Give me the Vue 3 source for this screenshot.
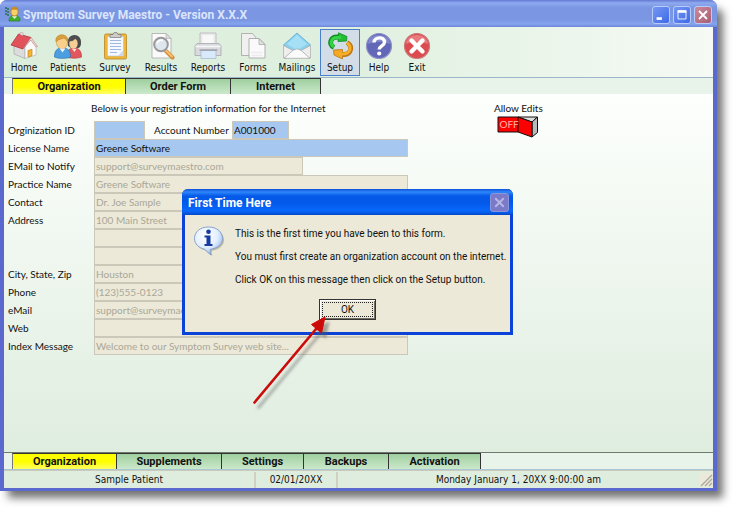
<script setup>
import { ref } from 'vue'

const tools = [
  { name: 'Home', size: 'w40' },
  { name: 'Patients', size: 'w48' },
  { name: 'Survey', size: 'w46' },
  { name: 'Results', size: 'w46' },
  { name: 'Reports', size: 'w48' },
  { name: 'Forms', size: 'w42' },
  { name: 'Mailings', size: 'w46' },
  { name: 'Setup', size: 'w40' },
  { name: 'Help', size: 'w38' },
  { name: 'Exit', size: 'w38' }
]

const topTabs = [
  { name: 'Organization', size: 't114' },
  { name: 'Order Form', size: 't105' },
  { name: 'Internet', size: 't90' }
]
const bottomTabs = [
  { name: 'Organization', size: 't105' },
  { name: 'Supplements', size: 't105' },
  { name: 'Settings', size: 't82' },
  { name: 'Backups', size: 't85' },
  { name: 'Activation', size: 't92' }
]
const activeTop = ref('Organization')
const activeBottom = ref('Organization')

const fields = [
  { id: 'license', label: 'License Name', value: 'Greene Software', kind: 'blue' },
  { id: 'notify', label: 'EMail to Notify', value: 'support@surveymaestro.com', kind: 'medium' },
  { id: 'practice', label: 'Practice Name', value: 'Greene Software' },
  { id: 'contact', label: 'Contact', value: 'Dr. Joe Sample' },
  { id: 'address1', label: 'Address', value: '100 Main Street' },
  { id: 'address2', label: '', aria: 'Address line 2', value: '' },
  { id: 'address3', label: '', aria: 'Address line 3', value: '' },
  { id: 'city', label: 'City, State, Zip', value: 'Houston' },
  { id: 'phone', label: 'Phone', value: '(123)555-0123' },
  { id: 'email', label: 'eMail', value: 'support@surveymaestro.com' },
  { id: 'web', label: 'Web', value: '' },
  { id: 'index', label: 'Index Message', value: 'Welcome to our Symptom Survey web site...' }
]
</script>

<template>
  <div class="desktop">
    <main class="window">
      <header class="titlebar">
        <svg class="app-icon" viewBox="0 0 16 16" aria-hidden="true">
          <path d="M1 1v9M3 2v9" stroke="#1c6b3a" stroke-width="1.3" stroke-dasharray="2 1" />
          <path d="M4 15c0-4 2-5.5 5.500-5.500S15 11 15 15z" fill="#3fae2c" stroke="#1f7a1c" stroke-width=".6" />
          <path d="M7 10l2.500 3L12 10z" fill="#eaf6d8" />
          <ellipse cx="9.500" cy="5.500" rx="3.600" ry="4.500" fill="#f7cf62" stroke="#a9721b" stroke-width=".7" />
          <path d="M6 4.500C6 0 13 0 13 4.500c-2-1.300-5-1.300-7 0z" fill="#c98922" />
        </svg>
        <h1>Symptom Survey Maestro - Version X.X.X</h1>
        <div class="controls">
          <button type="button" aria-label="Minimize"><svg viewBox="0 0 18 18"><path d="M4 13h6" stroke="#fff" stroke-width="3" /></svg></button>
          <button type="button" aria-label="Maximize"><svg viewBox="0 0 18 18"><path d="M4.500 5v8.500h9V5z" fill="none" stroke="#fff" /><path d="M4 5h10" stroke="#fff" stroke-width="3" /></svg></button>
          <button type="button" class="close" aria-label="Close"><svg viewBox="0 0 18 18"><path d="M4.500 4.500l9 9M13.500 4.500l-9 9" stroke="#fff" stroke-width="2" /></svg></button>
        </div>
      </header>

      <nav class="toolbar" aria-label="Main">
        <button v-for="t in tools" :key="t.name" type="button" class="tool" :class="[t.size, { pressed: t.name === 'Setup' }]">
          <svg v-if="t.name === 'Home'" viewBox="0 0 28 28" aria-hidden="true">
            <path d="M4 13v9l11 4.500V14L8 6z" fill="#dcdcdc" stroke="#a8a8a8" stroke-width=".7" />
            <path d="M15 14l6-6.500 5 7V23l-11 3.500z" fill="#fafafa" stroke="#b5b5b5" stroke-width=".7" />
            <path d="M1 13L8.500 2 21 5.500 13 17z" fill="#e2525a" stroke="#b3343c" stroke-width=".8" />
            <path d="M21 5.500l6.500 9-1.500.5-5.300-7-6.700 8-1 1z" fill="#f7dcdc" stroke="#b98080" stroke-width=".6" />
            <path d="M10 2.500V.8h3v3z" fill="#eee" stroke="#b08080" stroke-width=".5" />
            <path d="M18 18.500l4-1.200v6.500l-4 1.300z" fill="#f5b52e" stroke="#c2821b" stroke-width=".7" />
          </svg>
          <svg v-else-if="t.name === 'Patients'" viewBox="0 0 28 28" aria-hidden="true">
            <path d="M13 25c0-6 2-9 7-9s7.500 3 7.500 9c-3 1.500-12 1.500-14.500 0z" fill="#e4575c" stroke="#b8393f" stroke-width=".7" />
            <path d="M14 14c-3-14 14-14 13-3 0 4-2 5-3 5h-7z" fill="#4a4a4a" />
            <ellipse cx="19.500" cy="11.500" rx="4.200" ry="5.300" fill="#f6cf96" />
            <path d="M14.500 9c4 1 6-1 7-3 1 2 2 3 4 3-1-6-10-7-11 0z" fill="#505050" />
            <path d="M.5 25c0-6 2-9 8-9s8 3 8 9c-3 1.800-13 1.800-16 0z" fill="#4b9fe0" stroke="#2874b6" stroke-width=".7" />
            <ellipse cx="8" cy="10.500" rx="5.500" ry="6.500" fill="#f8d08c" stroke="#c89545" stroke-width=".6" />
            <path d="M2 10C0 1 15 0 14 10c-2-3-3-3-4-4-2 1-6 1-8 4z" fill="#d9a03d" stroke="#b47a24" stroke-width=".5" />
            <path d="M5.500 16.500l3 4 3-4z" fill="#e7f3fc" />
            <path d="M18 17l2.500 3 2-3z" fill="#fbe1da" />
          </svg>
          <svg v-else-if="t.name === 'Survey'" viewBox="0 0 28 28" aria-hidden="true">
            <rect x="3.500" y="2" width="22" height="25" rx="1.500" fill="#efb638" stroke="#b88624" stroke-width=".8" />
            <path d="M6.500 4.500h16V24h-16z" fill="#f5f9ff" stroke="#b6bfce" stroke-width=".6" />
            <path d="M9 8.500h11M9 11.500h11M9 14.500h11M9 17.500h11M9 20.500h7" stroke="#9eb8e2" stroke-width="1.200" />
            <path d="M17 24l5.500-6V24z" fill="#ccd7e8" />
            <path d="M9 5.500V2.500h3L13 .6h3l1 1.900h3v3z" fill="#ccc" stroke="#777" stroke-width=".7" />
          </svg>
          <svg v-else-if="t.name === 'Results'" viewBox="0 0 28 28" aria-hidden="true">
            <path d="M5 1.500h14l5 5V26H5z" fill="#fafafa" stroke="#aaa" stroke-width=".8" />
            <path d="M19 1.500v5h5z" fill="#ddd" stroke="#aaa" stroke-width=".6" />
            <path d="M19 19l6.500 6.500" stroke="#d08a3a" stroke-width="4" stroke-linecap="round" />
            <path d="M19 18.500l6 6" stroke="#f8bd66" stroke-width="2.200" stroke-linecap="round" />
            <circle cx="14" cy="12.500" r="6.800" fill="#dfe7ee" stroke="#999" stroke-width="2" />
            <path d="M10 11.500c1-3 4-4 6-3" fill="none" stroke="#fff" stroke-width="1.500" />
          </svg>
          <svg v-else-if="t.name === 'Reports'" viewBox="0 0 28 28" aria-hidden="true">
            <path d="M6 1h16v12H6z" fill="#e9e9eb" stroke="#b5b5b8" stroke-width=".8" />
            <path d="M8.500 3h11v8h-11z" fill="#f8f8f8" />
            <path d="M3 11.500h22l2 2.500v9.500H1V14z" fill="#d9dadf" stroke="#a7a7ac" stroke-width=".8" />
            <path d="M1.500 14.500h25" stroke="#f7f7f7" stroke-width="1.500" />
            <path d="M7 18.500h15v8H7z" fill="#d8e9fc" stroke="#a4b6ca" stroke-width=".7" />
            <path d="M5.500 18h18" stroke="#888" />
          </svg>
          <svg v-else-if="t.name === 'Forms'" viewBox="0 0 28 28" aria-hidden="true">
            <path d="M2.500 1.500h11l4 5v17h-15z" fill="#f0f0f0" stroke="#aaa" stroke-width=".9" />
            <path d="M10 6.500h10l6 6V26H10z" fill="#fafafa" stroke="#a8a8a8" stroke-width=".9" />
            <path d="M20 6.500v6h6z" fill="#e2e2e2" stroke="#a8a8a8" stroke-width=".8" />
            <path d="M12.500 23.500h11M12.500 20.500h11" stroke="#ececec" stroke-width="1.500" />
          </svg>
          <svg v-else-if="t.name === 'Mailings'" viewBox="0 0 28 28" aria-hidden="true">
            <path d="M.5 13L14 1l13.500 12-13.500 9z" fill="#8bd2ef" stroke="#5baacb" stroke-width=".8" />
            <path d="M4 12L14 3l10 9-10 6z" fill="#a6e0f6" />
            <path d="M.5 13.500l9.500 5L4 26H.5zM27.500 13.500l-9.500 5 6 7.500h3.500z" fill="#eee" stroke="#aaa" stroke-width=".7" />
            <path d="M1 26.300l9-8 4-1.500 4 1.500 9 8z" fill="#fbfbfb" stroke="#aaa" stroke-width=".8" />
          </svg>
          <svg v-else-if="t.name === 'Setup'" viewBox="0 0 28 28" aria-hidden="true">
            <path d="M8 15.500C2 12 4.500 5 11 5h3" fill="none" stroke="#168b23" stroke-width="4.800" />
            <path d="M12.500.8l8.500 3.700-.5 4.500-8.500.500z" fill="#21bd35" stroke="#168b23" stroke-width=".8" />
            <path d="M8 15C3 12 5 5.500 11 5.500h4" fill="none" stroke="#35d447" stroke-width="3" />
            <path d="M21 10.500c6 3.500 4.500 11.500-3 12h-4" fill="none" stroke="#bb771a" stroke-width="4.800" />
            <path d="M16.500 27l-8.500-4-.5-5 9-.5z" fill="#f4a923" stroke="#bb771a" stroke-width=".8" />
            <path d="M21 11c5 3 4 10.500-3 11h-5" fill="none" stroke="#f6ad27" stroke-width="3" />
          </svg>
          <svg v-else-if="t.name === 'Help'" viewBox="0 0 28 28" aria-hidden="true">
            <circle cx="14" cy="14" r="12.500" fill="#6267b8" stroke="#8e92c7" stroke-width="1.200" />
            <path d="M3 12C4 0 24 0 25 12 18 9 10 9 3 12z" fill="#8589cc" />
            <path d="M9 10.500c.2-6 10.700-6.200 10.500-.3-.1 3.800-5.300 3.600-5.300 7.300" fill="none" stroke="#fff" stroke-width="3.400" />
            <circle cx="14.200" cy="21.500" r="2.100" fill="#fff" />
          </svg>
          <svg v-else viewBox="0 0 28 28" aria-hidden="true">
            <circle cx="14" cy="14" r="12.500" fill="#dc4b50" stroke="#c87979" stroke-width="1.200" />
            <path d="M3 12C4 0 24 0 25 12 18 9 10 9 3 12z" fill="#e77b7e" />
            <path d="M8.500 8.500l11 11M19.500 8.500l-11 11" stroke="#fff" stroke-width="4.400" stroke-linecap="round" />
          </svg>
          <span>{{ t.name }}</span>
        </button>
      </nav>

      <nav class="tabs" aria-label="Form pages">
        <button v-for="t in topTabs" :key="t.name" type="button" :class="[t.size, { active: t.name === activeTop }]" @click="activeTop = t.name">{{ t.name }}</button>
      </nav>

      <section class="content">
        <form class="form" @submit.prevent>
          <p class="intro">Below is your registration information for the Internet</p>
          <div class="row">
            <label for="orgid">Orginization ID</label>
            <input id="orgid" class="blue short" value="" readonly />
            <label class="account" for="account">Account Number</label>
            <input id="account" class="blue number" value="A001000" readonly />
          </div>
          <div v-for="f in fields" :key="f.id" class="row">
            <label :for="f.id">{{ f.label }}</label>
            <input :id="f.id" :class="f.kind" :value="f.value" :aria-label="f.aria" :disabled="f.kind !== 'blue'" :readonly="f.kind === 'blue'" />
          </div>
        </form>
        <div class="edits">
          <span id="edits-label">Allow Edits</span>
          <button type="button" class="switch" role="switch" aria-checked="false" aria-labelledby="edits-label">
            <svg viewBox="0 0 42 22" aria-hidden="true">
              <path d="M1 1h20v15H1z" fill="#f00" stroke="#111" />
              <path d="M21 1h19l-5 5z" fill="#ddd" stroke="#111" />
              <path d="M35 6l5.500-5v15.500L35 21z" fill="#b9b9b9" stroke="#111" />
              <path d="M21 1l14 5v15l-14-5z" fill="#f00" stroke="#111" />
            </svg>
            <span>OFF</span>
          </button>
        </div>
      </section>

      <nav class="tabs bottom" aria-label="Sections">
        <button v-for="t in bottomTabs" :key="t.name" type="button" :class="[t.size, { active: t.name === activeBottom }]" @click="activeBottom = t.name">{{ t.name }}</button>
      </nav>

      <footer class="status">
        <span class="patient">Sample Patient</span>
        <span class="date">02/01/20XX</span>
        <span class="clock">Monday January 1, 20XX 9:00:00 am</span>
        <svg viewBox="0 0 14 14" aria-hidden="true"><path d="M2 13L13 2M6 13l7-7M10 13l3-3" stroke="#aaa79a" stroke-width="1.300" /></svg>
      </footer>
    </main>

    <section class="dialog" role="dialog" aria-labelledby="dialog-title">
      <header>
        <h2 id="dialog-title">First Time Here</h2>
        <button type="button" aria-label="Close message" disabled><svg viewBox="0 0 18 18"><path d="M4.500 4.500l9 9M13.500 4.500l-9 9" stroke="#b9b8e8" stroke-width="2" /></svg></button>
      </header>
      <div class="message">
        <svg class="info" viewBox="0 0 32 32" aria-hidden="true">
          <defs>
            <radialGradient id="bubble" cx=".4" cy=".3" r=".7">
              <stop offset="0" stop-color="#fff" />
              <stop offset=".6" stop-color="#e3efff" />
              <stop offset="1" stop-color="#9fbfed" />
            </radialGradient>
          </defs>
          <path d="M17 3C8.500 3 3 8 3 14c0 5.500 4.500 9.500 10 10.700 2 2 4 3.500 6.500 5.300-1-2.500-1-4-.5-5.300 6.500-.7 12-4.700 12-10.700C31 8 25.500 3 17 3z" fill="#a6a492" opacity=".7" />
          <path d="M15.500 1C7 1 1.500 6 1.500 12.500c0 5.500 4.500 9.500 10 10.700 2 2 4 3.800 6.500 5.800-1-3-1-4.500-.5-5.800C24 22.500 29.500 18.500 29.500 12.500 29.500 6 24 1 15.500 1z" fill="url(#bubble)" stroke="#7d9cc9" stroke-width=".9" />
          <circle cx="15.500" cy="5.800" r="2.300" fill="#173c9f" />
          <path d="M11.500 9.500h6V18h2v2h-8v-2h2v-6.500h-2z" fill="#173c9f" />
        </svg>
        <div class="copy">
          <p>This is the first time you have been to this form.</p>
          <p>You must first create an organization account on the internet.</p>
          <p>Click OK on this message then click on the Setup button.</p>
        </div>
      </div>
      <button type="button" class="ok"><span>OK</span></button>
    </section>

    <svg class="pointer" viewBox="0 0 90 100" aria-hidden="true">
      <defs>
        <filter id="soft" x="-20%" y="-20%" width="140%" height="140%"><feGaussianBlur stdDeviation="1.500" /></filter>
        <g id="arrow">
          <path d="M4.500 87.500L66 14" stroke-width="2.600" stroke-linecap="round" />
          <path d="M75 2L61.500 9.500l10 8.500z" stroke-width="1" />
        </g>
      </defs>
      <use href="#arrow" x="4" y="5" fill="#555" stroke="#555" opacity=".5" filter="url(#soft)" />
      <use href="#arrow" fill="#cc0a0a" stroke="#cc0a0a" />
    </svg>
  </div>
</template>

<style>
body {
  margin: 0;
  background: #fff;
}
</style>

<style scoped>
.desktop {
  --tahoma: "DejaVu Sans Condensed", "Liberation Sans", sans-serif;
  --ui: Lato, "Liberation Sans", sans-serif;
  --message: Roboto, "Liberation Sans", sans-serif;
  --caption: Roboto, "Noto Sans", sans-serif;
  position: relative;
  display: flex;
  box-sizing: border-box;
  min-height: 100vh;
  padding: 0 16px 16px 0;
  font-family: var(--ui);
  font-size: 10px;
  color: #111;
}
button {
  margin: 0;
  padding: 0;
  border: 0;
  font: inherit;
  color: inherit;
  background: none;
}
h1, h2, p {
  margin: 0;
}
.window {
  flex: 1;
  display: flex;
  flex-direction: column;
  box-sizing: border-box;
  border: solid #5b69cf;
  border-width: 0 4px 3px;
  border-radius: 7px 7px 0 0;
  background: #dfeddf;
  box-shadow: 7px 8px 9px -1px rgba(0, 0, 0, 0.55);
}
.titlebar {
  display: flex;
  align-items: center;
  height: 27px;
  margin: 0 -4px;
  padding: 0 5px;
  box-sizing: border-box;
  border-radius: 7px 7px 0 0;
  background: linear-gradient(#6578d2 0, #8eaaf0 3px, #7a95e2 8px, #7b97e2 20px, #85a4ee 24px, #6c86d8 27px);
}
.app-icon {
  width: 16px;
  height: 16px;
}
.titlebar h1 {
  flex: 1;
  padding: 2px 0 0 2px;
  font: 700 12px/16px var(--caption);
  color: #dbe5fc;
}
.controls {
  display: flex;
  gap: 3px;
  padding-top: 2px;
}
.controls button {
  width: 18px;
  height: 18px;
  box-sizing: border-box;
  border: 1px solid #b9cbf8;
  border-radius: 3px;
  background: linear-gradient(135deg, #7597f2, #3e6ae8);
}
.controls svg, .dialog header svg {
  display: block;
  width: 100%;
  height: 100%;
}
.controls .close {
  background: linear-gradient(135deg, #c98a9b, #a95e74);
}
.toolbar {
  display: flex;
  padding: 2px 0 1px;
  border-bottom: 1px solid #9db5c8;
  background: linear-gradient(90deg, #dbeddb, #e0f0e0 50%, #f5faf4);
}
.tool {
  display: flex;
  flex-direction: column;
  align-items: center;
  box-sizing: border-box;
  height: 47px;
  padding-top: 2px;
  border: 1px solid transparent;
  font-family: var(--tahoma);
  font-size: 10px;
  line-height: 16px;
  white-space: nowrap;
}
.tool svg {
  flex: none;
  width: 28px;
  height: 28px;
}
.tool.pressed {
  border-color: #4a7fc9;
  background: #d3dde8;
}
.w38 { width: 38px; }
.w40 { width: 40px; }
.w42 { width: 42px; }
.w46 { width: 46px; }
.w48 { width: 48px; }
.tabs {
  display: flex;
  height: 16px;
  padding-left: 8px;
  background: #e8f3e9;
}
.tabs button {
  box-sizing: border-box;
  border-top: 1px solid #333;
  border-right: 1px solid #333;
  background: linear-gradient(#9fcf9f, #cbe8cb);
  font: 700 11px/16px var(--message);
}
.tabs button:first-child {
  border-left: 1px solid #777;
}
.tabs .active {
  background: linear-gradient(#ffff00 50%, #ffff60);
}
.t82 { width: 82px; }
.t85 { width: 85px; }
.t90 { width: 90px; }
.t92 { width: 92px; }
.t105 { width: 105px; }
.t114 { width: 114px; }
.tabs.bottom {
  border-top: 1px solid #6d7a6d;
  border-bottom: 1px solid #a9c6d4;
}
.content {
  flex: 1;
  display: flex;
  align-items: flex-start;
  gap: 86px;
  padding: 6px 4px 16px;
  background: linear-gradient(#fdfffd, #dfeddf);
}
.form {
  width: 400px;
}
.intro {
  padding: 0 0 5px 83px;
  line-height: 16px;
}
.row {
  display: flex;
  height: 18px;
}
.row label {
  width: 86px;
  line-height: 19px;
  white-space: nowrap;
}
.row .account {
  width: 78px;
  padding-left: 9px;
}
.row input {
  flex: 1;
  min-width: 0;
  box-sizing: border-box;
  height: 18px;
  margin: 0;
  padding: 0 1px;
  border: 1px solid #cbc8ba;
  border-radius: 0;
  background: #ece9d8;
  font: inherit;
  color: #aaa799;
}
.row .medium {
  flex: 0 0 209px;
}
.row .blue {
  background: #a6c8f0;
  color: #111;
}
.row .short {
  flex: 0 0 51px;
}
.row .number {
  flex: 0 0 57px;
}
.edits {
  display: flex;
  flex-direction: column;
  align-items: center;
  line-height: 16px;
}
.switch {
  display: grid;
  width: 42px;
  height: 22px;
}
.switch svg, .switch span {
  grid-area: 1 / 1;
}
.switch svg {
  width: 42px;
  height: 22px;
}
.switch span {
  padding-left: 2px;
  text-align: left;
  color: #ffb4a8;
}
.status {
  display: flex;
  align-items: center;
  height: 17px;
  border-top: 1px solid #c9c9bc;
  font-family: var(--tahoma);
  font-size: 10px;
  line-height: 16px;
  text-align: center;
}
.patient {
  width: 252px;
  box-sizing: border-box;
  border-right: 2px solid #cfcfc2;
}
.date {
  width: 82px;
  box-sizing: border-box;
  border-right: 2px solid #cfcfc2;
}
.clock {
  flex: 1;
}
.status svg {
  width: 14px;
  height: 14px;
  background: #ebe9da;
}
.dialog {
  position: absolute;
  left: 182px;
  top: 189px;
  box-sizing: border-box;
  width: 331px;
  display: flex;
  flex-direction: column;
  align-items: center;
  padding-bottom: 12px;
  border: solid #0b43d8;
  border-width: 0 3px 3px;
  border-radius: 6px 6px 0 0;
  background: #ece9d8;
  font-family: var(--message);
  font-size: 10px;
}
.dialog header {
  align-self: stretch;
  display: flex;
  align-items: center;
  justify-content: space-between;
  height: 26px;
  margin: 0 -3px;
  padding: 1px 4px 0 6px;
  box-sizing: border-box;
  border-radius: 6px 6px 0 0;
  background: linear-gradient(#0b4fd8 0, #2f87fb 3px, #0459e8 7px, #0459ea 14px, #0868fb 22px, #0348c8 26px);
}
.dialog h2 {
  font: 700 12px/16px var(--caption);
  color: #fff;
}
.dialog header button {
  width: 19px;
  height: 19px;
  box-sizing: border-box;
  border: 1px solid #8a96dc;
  border-radius: 3px;
  background: #7a7ac8;
}
.message {
  align-self: stretch;
  display: flex;
  gap: 10px;
  padding: 11px 0 11px 8px;
}
.info {
  flex: none;
  width: 32px;
  height: 32px;
}
.copy {
  display: grid;
  gap: 7px;
  line-height: 16px;
  white-space: nowrap;
}
.ok {
  width: 57px;
  height: 21px;
  padding: 2px;
  box-sizing: border-box;
  border: 1px solid #333;
  box-shadow: inset 1px 1px #fff, inset -1px -1px #716f64;
}
.ok span {
  display: block;
  border: 1px dotted #222;
  line-height: 13px;
}
.pointer {
  position: absolute;
  left: 250px;
  top: 315px;
  width: 90px;
  height: 100px;
  pointer-events: none;
}
</style>
